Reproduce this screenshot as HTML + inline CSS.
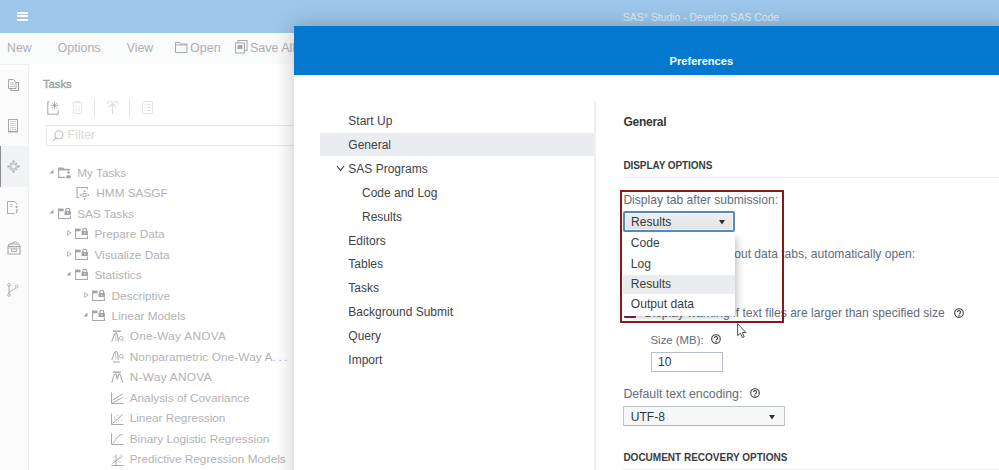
<!DOCTYPE html>
<html><head><meta charset="utf-8"><style>
html,body{margin:0;padding:0;width:999px;height:470px;overflow:hidden;background:#FFFFFF;position:relative}
body>div,body>svg{position:absolute}
.t{white-space:nowrap;line-height:1;font-family:"Liberation Sans", sans-serif}
</style></head><body>
<div style="left:0px;top:0px;width:999px;height:33px;background:#9DC7EA"></div>
<div style="left:17px;top:11.9px;width:11.2px;height:2px;background:#fff"></div>
<div style="left:17px;top:15.4px;width:11.2px;height:2px;background:#fff"></div>
<div style="left:17px;top:18.9px;width:11.2px;height:2px;background:#fff"></div>
<div class="t" style="left:622.8px;top:13.00px;font-size:10.4px;color:#E2EEF8;font-weight:normal;">SAS<sup style="font-size:6px;vertical-align:3px">®</sup> Studio - Develop SAS Code</div>
<div style="left:0px;top:33px;width:999px;height:31px;background:#F9FAFA"></div>
<div class="t" style="left:7px;top:41.79px;font-size:12.3px;color:#AFAFAF;font-weight:normal;">New</div>
<div class="t" style="left:57.5px;top:41.62px;font-size:12.5px;color:#AFAFAF;font-weight:normal;">Options</div>
<div class="t" style="left:126.7px;top:41.79px;font-size:12.3px;color:#AFAFAF;font-weight:normal;">View</div>
<div class="t" style="left:190px;top:41.62px;font-size:12.5px;color:#AFAFAF;font-weight:normal;">Open</div>
<div class="t" style="left:250px;top:41.62px;font-size:12.5px;color:#AFAFAF;font-weight:normal;">Save All</div>
<svg style="left:175px;top:41px" width="13" height="12" viewBox="0 0 13 12"><path d="M0.5 1.5h4l1 1.5h6.5v8.5h-11.5z" fill="none" stroke="#A8A8A8" stroke-width="1"/><path d="M0.5 4h11.5" stroke="#A8A8A8"/></svg>
<svg style="left:235px;top:40px" width="13" height="14" viewBox="0 0 13 14"><rect x="3" y="0.5" width="9" height="10" fill="none" stroke="#A8A8A8"/><rect x="0.5" y="3" width="9" height="10" fill="#F8F8F8" stroke="#A8A8A8"/><rect x="2.5" y="5" width="5" height="4" fill="#A8A8A8"/></svg>
<div style="left:0px;top:64px;width:28px;height:406px;background:#FBFBFC"></div>
<div style="left:0px;top:63.5px;width:28.5px;height:1px;background:#EFF0F4"></div>
<div style="left:28px;top:64px;width:1px;height:406px;background:#EEEFF3"></div>
<div style="left:0px;top:146px;width:28px;height:41px;background:#F1F2F5"></div>
<div style="left:0px;top:146px;width:1.1px;height:41px;background:#8E8E8E"></div>
<div style="left:29px;top:64px;width:265px;height:406px;background:#FFFFFF"></div>
<div class="t" style="left:43px;top:79.33px;font-size:11.3px;color:#9C9C9C;font-weight:normal;-webkit-text-stroke:0.35px #9C9C9C;letter-spacing:-0.05px">Tasks</div>
<svg style="left:7.5px;top:78.5px" width="12" height="13" viewBox="0 0 12 13"><path d="M3 3.5V11.5H10.5V3.5z" fill="none" stroke="#A0A0A0" stroke-width="1.1"/><path d="M0.5 0.5h5l2.5 2.5v6.5h-7.5z" fill="#FBFBFC" stroke="#A5A5A5"/><path d="M2 4h4M2 5.8h4.5M2 7.6h4.5" stroke="#B0B0B0" stroke-width="0.7"/></svg>
<svg style="left:8px;top:118.5px" width="11" height="14" viewBox="0 0 11 14"><rect x="0.5" y="0.5" width="9" height="12" fill="none" stroke="#A8A8A8"/><path d="M2 2.5h6M2 4.5h6M2 6.5h6M2 8.5h6" stroke="#C4C4C4" stroke-width="0.7"/><path d="M2 10.5h1M4.5 10.5h1M7 10.5h1" stroke="#A8A8A8"/><path d="M0 12.9h10" stroke="#9C9C9C"/></svg>
<svg style="left:6.5px;top:160px" width="13" height="13" viewBox="0 0 13 13"><circle cx="6.5" cy="6.5" r="4.2" fill="none" stroke="#C4C4C8" stroke-width="0.7"/><circle cx="6.5" cy="6.5" r="2.8" fill="none" stroke="#A8A8AC" stroke-width="1"/><circle cx="6.5" cy="1.3" r="1" fill="#A4A4A8"/><circle cx="6.5" cy="11.7" r="1" fill="#A4A4A8"/><circle cx="1.3" cy="6.5" r="1" fill="#A4A4A8"/><circle cx="11.7" cy="6.5" r="1" fill="#A4A4A8"/><circle cx="3.5" cy="3.5" r="0.75" fill="#B0B0B4"/><circle cx="9.5" cy="3.5" r="0.75" fill="#B0B0B4"/><circle cx="3.5" cy="9.5" r="0.75" fill="#B0B0B4"/><circle cx="9.5" cy="9.5" r="0.75" fill="#B0B0B4"/></svg>
<svg style="left:7px;top:200.5px" width="12" height="13" viewBox="0 0 12 13"><path d="M7.5 0.5h-7v12h7" fill="none" stroke="#ABABAB"/><path d="M7.5 0.5l2 2v1" fill="none" stroke="#ABABAB"/><path d="M2.5 3.5h3M2.5 5.5h3" stroke="#B5B5B5" stroke-width="0.8"/><circle cx="9.5" cy="6" r="1" fill="#A0A0A0"/><path d="M9.5 8c1 0 1 2.5 -0.5 4" fill="none" stroke="#A0A0A0" stroke-width="1.2"/></svg>
<svg style="left:6.5px;top:240.5px" width="14" height="14" viewBox="0 0 14 14"><path d="M1 5.5h12v7.5h-12z" fill="none" stroke="#A8A8A8" stroke-width="1.1"/><path d="M1 5.5l1-2.5h10l1 2.5" fill="none" stroke="#A8A8A8"/><path d="M3 3l6-2.5 2 2" fill="none" stroke="#A8A8A8"/><path d="M4.5 8h5v2.5h-5z" fill="none" stroke="#A8A8A8" stroke-width="0.9"/><path d="M1 7h12" stroke="#B8B8B8" stroke-width="0.8"/></svg>
<svg style="left:7px;top:282.5px" width="12" height="14" viewBox="0 0 12 14"><path d="M2 2v9" stroke="#A8A8A8"/><path d="M2 11C2 7 9 7 9 4" fill="none" stroke="#A8A8A8"/><circle cx="2" cy="1.8" r="1.3" fill="#fff" stroke="#A8A8A8" stroke-width="0.9"/><circle cx="2" cy="12" r="1.3" fill="#fff" stroke="#A8A8A8" stroke-width="0.9"/><circle cx="9.5" cy="3.5" r="1.3" fill="#fff" stroke="#A8A8A8" stroke-width="0.9"/></svg>
<svg style="left:47.3px;top:100.5px" width="12.5" height="14" viewBox="0 0 12.5 14"><path d="M2.5 1H0.8V13.2H11.2V9.5" fill="none" stroke="#A8A8A8" stroke-width="1.1"/><path d="M7.5 0.8v7M4 4.3h7M5 1.8l5 5M10 1.8l-5 5" stroke="#A0A0A0" stroke-width="0.85"/></svg>
<svg style="left:71.5px;top:101px" width="11" height="13" viewBox="0 0 11 13"><path d="M0 1.8h11M3.5 1.8V0.5h4v1.3" fill="none" stroke="#E0E0E0"/><path d="M1.3 2.5V12.5h8.4V2.5" fill="none" stroke="#E0E0E0"/><path d="M4 4.5v6M7 4.5v6" stroke="#E4E4E4"/></svg>
<svg style="left:106.5px;top:101px" width="11" height="13" viewBox="0 0 11 13"><path d="M0.5 3V0.8H10.5V3" fill="none" stroke="#E0E0E0"/><path d="M5.5 13V3M2 6l3.5-3.5L9 6" fill="none" stroke="#DCDCDC" stroke-width="1.2"/></svg>
<svg style="left:141.5px;top:101px" width="11" height="13" viewBox="0 0 11 13"><rect x="0.5" y="0.5" width="10" height="12" rx="1" fill="none" stroke="#E2E2E2"/><path d="M2.5 3.5h1M5 3.5h3.5M2.5 6.5h1M5 6.5h3.5M2.5 9.5h1M5 9.5h3.5" stroke="#E0E0E0"/></svg>
<div style="left:94px;top:100px;width:1px;height:16px;background:#E4E6EA"></div>
<div style="left:129px;top:100px;width:1px;height:16px;background:#E4E6EA"></div>
<div style="left:46px;top:125px;width:260px;height:21px;border:1px solid #E6E8EC;box-sizing:border-box;background:#FFFFFF"></div>
<div class="t" style="left:67.5px;top:129.42px;font-size:12.5px;color:#DADADA;font-weight:normal;">Filter</div>
<svg style="left:51.5px;top:129.8px" width="12" height="12" viewBox="0 0 12 12"><circle cx="7" cy="4.8" r="4" fill="none" stroke="#BDBDBD" stroke-width="1.1"/><path d="M4.2 7.6L1 10.8" stroke="#BDBDBD" stroke-width="1.1"/></svg>
<div class="t" style="left:77.2px;top:167.81px;font-size:11.8px;color:#B2B2B4;font-weight:normal;">My Tasks</div>
<svg style="left:49.1px;top:168.5px" width="5" height="5" viewBox="0 0 5 5"><path d="M4.5 0.5V4.5H0.5z" fill="#9E9E9E"/></svg>
<svg style="left:57.8px;top:167.20000000000002px" width="14" height="12" viewBox="0 0 14 12"><path d="M0.6 1V10.4H7" fill="none" stroke="#A8A8AC" stroke-width="1.1"/><path d="M0 0.4h5.5l1 1.4H12v1.6H0z" fill="#A9A9AD"/><path d="M0.6 3.2V1" stroke="#A8A8AC"/><circle cx="10.5" cy="5.6" r="1.25" fill="#A3A3A7"/><path d="M8.3 11.2V9.3a1 1 0 0 1 1-1h2.4a1 1 0 0 1 1 1v1.9z" fill="#A3A3A7"/></svg>
<div class="t" style="left:96.3px;top:188.27px;font-size:11.8px;color:#B2B2B4;font-weight:normal;">HMM SASGF</div>
<svg style="left:76px;top:185.96px" width="14" height="14" viewBox="0 0 14 14"><path d="M3 11.5H1V1.5H11.2V3.2" fill="none" stroke="#AEAEB2" stroke-width="1.2"/><circle cx="8.5" cy="5.2" r="0.95" fill="#A8A8AC"/><circle cx="8.5" cy="12.8" r="0.95" fill="#A8A8AC"/><circle cx="4.7" cy="9" r="0.95" fill="#A8A8AC"/><circle cx="12.3" cy="9" r="0.95" fill="#A8A8AC"/><rect x="7" y="7.5" width="3" height="3" fill="none" stroke="#A8A8AC" stroke-width="0.9"/><path d="M6 6.5l1 1M11 6.5l-1 1M6 11.5l1-1M11 11.5l-1-1" stroke="#BDBDC0" stroke-width="0.8"/></svg>
<div class="t" style="left:77.2px;top:208.73px;font-size:11.8px;color:#B2B2B4;font-weight:normal;">SAS Tasks</div>
<svg style="left:49.1px;top:209.42000000000002px" width="5" height="5" viewBox="0 0 5 5"><path d="M4.5 0.5V4.5H0.5z" fill="#9E9E9E"/></svg>
<svg style="left:57.8px;top:207.72000000000003px" width="14" height="12" viewBox="0 0 14 12"><rect x="0" y="0.6" width="5.6" height="2.7" fill="#A3A3A7"/><path d="M0.55 0.6V10.45H12.45V7.6" fill="none" stroke="#A8A8AC" stroke-width="1.1"/><rect x="6.6" y="3" width="6.3" height="4" fill="#A3A3A7"/><path d="M7.9 3.1V2.1a1.85 1.85 0 0 1 3.7 0V3.1" fill="none" stroke="#A3A3A7" stroke-width="1.1"/><rect x="9.3" y="4" width="1" height="2" fill="#E4E4E6"/></svg>
<div class="t" style="left:94.4px;top:229.19px;font-size:11.8px;color:#B2B2B4;font-weight:normal;">Prepare Data</div>
<svg style="left:66.6px;top:230.38px" width="5" height="6" viewBox="0 0 5 6"><path d="M0.6 0.6L4.2 3L0.6 5.4z" fill="none" stroke="#B0B0B0" stroke-width="0.9"/></svg>
<svg style="left:74.8px;top:228.18px" width="14" height="12" viewBox="0 0 14 12"><rect x="0" y="0.6" width="5.6" height="2.7" fill="#A3A3A7"/><path d="M0.55 0.6V10.45H12.45V7.6" fill="none" stroke="#A8A8AC" stroke-width="1.1"/><rect x="6.6" y="3" width="6.3" height="4" fill="#A3A3A7"/><path d="M7.9 3.1V2.1a1.85 1.85 0 0 1 3.7 0V3.1" fill="none" stroke="#A3A3A7" stroke-width="1.1"/><rect x="9.3" y="4" width="1" height="2" fill="#E4E4E6"/></svg>
<div class="t" style="left:94.4px;top:249.65px;font-size:11.8px;color:#B2B2B4;font-weight:normal;">Visualize Data</div>
<svg style="left:66.6px;top:250.83999999999997px" width="5" height="6" viewBox="0 0 5 6"><path d="M0.6 0.6L4.2 3L0.6 5.4z" fill="none" stroke="#B0B0B0" stroke-width="0.9"/></svg>
<svg style="left:74.8px;top:248.64px" width="14" height="12" viewBox="0 0 14 12"><rect x="0" y="0.6" width="5.6" height="2.7" fill="#A3A3A7"/><path d="M0.55 0.6V10.45H12.45V7.6" fill="none" stroke="#A8A8AC" stroke-width="1.1"/><rect x="6.6" y="3" width="6.3" height="4" fill="#A3A3A7"/><path d="M7.9 3.1V2.1a1.85 1.85 0 0 1 3.7 0V3.1" fill="none" stroke="#A3A3A7" stroke-width="1.1"/><rect x="9.3" y="4" width="1" height="2" fill="#E4E4E6"/></svg>
<div class="t" style="left:94.4px;top:270.11px;font-size:11.8px;color:#B2B2B4;font-weight:normal;">Statistics</div>
<svg style="left:66.1px;top:270.8px" width="5" height="5" viewBox="0 0 5 5"><path d="M4.5 0.5V4.5H0.5z" fill="#9E9E9E"/></svg>
<svg style="left:74.8px;top:269.1px" width="14" height="12" viewBox="0 0 14 12"><rect x="0" y="0.6" width="5.6" height="2.7" fill="#A3A3A7"/><path d="M0.55 0.6V10.45H12.45V7.6" fill="none" stroke="#A8A8AC" stroke-width="1.1"/><rect x="6.6" y="3" width="6.3" height="4" fill="#A3A3A7"/><path d="M7.9 3.1V2.1a1.85 1.85 0 0 1 3.7 0V3.1" fill="none" stroke="#A3A3A7" stroke-width="1.1"/><rect x="9.3" y="4" width="1" height="2" fill="#E4E4E6"/></svg>
<div class="t" style="left:111.6px;top:290.57px;font-size:11.8px;color:#B2B2B4;font-weight:normal;">Descriptive</div>
<svg style="left:83.6px;top:291.76px" width="5" height="6" viewBox="0 0 5 6"><path d="M0.6 0.6L4.2 3L0.6 5.4z" fill="none" stroke="#B0B0B0" stroke-width="0.9"/></svg>
<svg style="left:91.8px;top:289.56px" width="14" height="12" viewBox="0 0 14 12"><rect x="0" y="0.6" width="5.6" height="2.7" fill="#A3A3A7"/><path d="M0.55 0.6V10.45H12.45V7.6" fill="none" stroke="#A8A8AC" stroke-width="1.1"/><rect x="6.6" y="3" width="6.3" height="4" fill="#A3A3A7"/><path d="M7.9 3.1V2.1a1.85 1.85 0 0 1 3.7 0V3.1" fill="none" stroke="#A3A3A7" stroke-width="1.1"/><rect x="9.3" y="4" width="1" height="2" fill="#E4E4E6"/></svg>
<div class="t" style="left:111.6px;top:311.03px;font-size:11.8px;color:#B2B2B4;font-weight:normal;">Linear Models</div>
<svg style="left:83.1px;top:311.71999999999997px" width="5" height="5" viewBox="0 0 5 5"><path d="M4.5 0.5V4.5H0.5z" fill="#9E9E9E"/></svg>
<svg style="left:91.8px;top:310.02px" width="14" height="12" viewBox="0 0 14 12"><rect x="0" y="0.6" width="5.6" height="2.7" fill="#A3A3A7"/><path d="M0.55 0.6V10.45H12.45V7.6" fill="none" stroke="#A8A8AC" stroke-width="1.1"/><rect x="6.6" y="3" width="6.3" height="4" fill="#A3A3A7"/><path d="M7.9 3.1V2.1a1.85 1.85 0 0 1 3.7 0V3.1" fill="none" stroke="#A3A3A7" stroke-width="1.1"/><rect x="9.3" y="4" width="1" height="2" fill="#E4E4E6"/></svg>
<div class="t" style="left:129.7px;top:331.49px;font-size:11.8px;color:#B2B2B4;font-weight:normal;letter-spacing:0.32px">One-Way ANOVA</div>
<svg style="left:110.8px;top:329.98px" width="13" height="13.5" viewBox="0 0 13 13.5"><path d="M2 1.2h8" stroke="#A0A0A0" stroke-width="1.3"/><path d="M0.6 11.5C2 10.5 2.5 3 5 3S6.5 10 7.5 11.5" fill="none" stroke="#A8A8A8" stroke-width="1.1"/><path d="M4.8 3.2V11.5" stroke="#B8B8B8" stroke-width="0.8"/><circle cx="10.2" cy="8.2" r="1.8" fill="none" stroke="#B0B0B0" stroke-width="0.9"/><path d="M11.4 9.6l0.8 1.6" stroke="#A8A8A8"/></svg>
<div class="t" style="left:129.7px;top:351.95px;font-size:11.8px;color:#B2B2B4;font-weight:normal;letter-spacing:0.1px">Nonparametric One-Way A<span style="letter-spacing:2.6px">...</span></div>
<svg style="left:110.8px;top:350.44000000000005px" width="13" height="13.5" viewBox="0 0 13 13.5"><path d="M2 12h7" stroke="#B0B0B0" stroke-width="1.1"/><path d="M0.6 10C2 9 2.5 1.5 5 1.5S6.5 8.5 7.5 10" fill="none" stroke="#A8A8A8" stroke-width="1.1"/><path d="M4.8 1.7V10" stroke="#B8B8B8" stroke-width="0.8"/><circle cx="10.2" cy="6.2" r="1.8" fill="none" stroke="#B0B0B0" stroke-width="0.9"/><path d="M11.4 7.6l0.8 1.6" stroke="#A8A8A8"/></svg>
<div class="t" style="left:129.7px;top:372.41px;font-size:11.8px;color:#B2B2B4;font-weight:normal;letter-spacing:0.32px">N-Way ANOVA</div>
<svg style="left:110.8px;top:370.90000000000003px" width="13" height="13.5" viewBox="0 0 13 13.5"><path d="M2 1.2h8" stroke="#A0A0A0" stroke-width="1.3"/><path d="M0.6 11.5C2 10.5 2 3 4.2 3S5.5 8 6.2 8S7 3 8.5 3S10.5 10.5 12 11.5" fill="none" stroke="#A8A8A8" stroke-width="1.1"/></svg>
<div class="t" style="left:129.7px;top:392.87px;font-size:11.8px;color:#B2B2B4;font-weight:normal;">Analysis of Covariance</div>
<svg style="left:110.8px;top:391.36px" width="13" height="13.5" viewBox="0 0 13 13.5"><path d="M0.5 1.5V12.5H12.5" fill="none" stroke="#A8A8A8"/><path d="M1.5 9L11.5 3M1.5 12L11.5 6.5" stroke="#A8A8A8"/></svg>
<div class="t" style="left:129.7px;top:413.33px;font-size:11.8px;color:#B2B2B4;font-weight:normal;">Linear Regression</div>
<svg style="left:110.8px;top:411.82000000000005px" width="13" height="13.5" viewBox="0 0 13 13.5"><path d="M0.5 1.5V12.5H12.5" fill="none" stroke="#A8A8A8"/><path d="M1.5 11.5L11.5 2.5" stroke="#A8A8A8"/><path d="M3 5h1M6 3.5h1M4 8h1M8 6h1M7 9h1M10 8h1M5 10.5h1M2.5 7.5h1" stroke="#C0C0C0"/></svg>
<div class="t" style="left:129.7px;top:433.79px;font-size:11.8px;color:#B2B2B4;font-weight:normal;">Binary Logistic Regression</div>
<svg style="left:110.8px;top:432.28000000000003px" width="13" height="13.5" viewBox="0 0 13 13.5"><path d="M0.5 1.5V12.5H12.5" fill="none" stroke="#A8A8A8"/><path d="M1.5 11.5C4 11 5 3 11.5 2.5" fill="none" stroke="#A8A8A8"/></svg>
<div class="t" style="left:129.7px;top:454.25px;font-size:11.8px;color:#B2B2B4;font-weight:normal;">Predictive Regression Models</div>
<svg style="left:110.8px;top:452.74px" width="13" height="13.5" viewBox="0 0 13 13.5"><path d="M0.5 12.5H12.5M5 1.5V12.5" fill="none" stroke="#A8A8A8"/><path d="M1.5 10.5L11.5 3" stroke="#A8A8A8"/><path d="M2 4h1.5M8 5h1.5M2 7.5h1.5M8 9h1.5M9 2h1.5" stroke="#C0C0C0"/></svg>
<div style="left:294px;top:26px;width:720px;height:460px;background:#fff;box-shadow:0 0 20px rgba(0,0,0,0.24)"></div>
<div style="left:294px;top:26px;width:720px;height:49px;background:#0478CF"></div>
<div class="t" style="left:669.6px;top:55.60px;font-size:11.1px;color:#fff;font-weight:bold;">Preferences</div>
<div style="left:320px;top:133px;width:274px;height:23px;background:#EBECF0"></div>
<div style="left:594px;top:102px;width:2px;height:368px;background:#EEEFF2"></div>
<div class="t" style="left:348.3px;top:114.94px;font-size:12px;color:#404248;font-weight:normal;">Start Up</div>
<div class="t" style="left:348.3px;top:138.86px;font-size:12px;color:#404248;font-weight:normal;">General</div>
<div class="t" style="left:348.3px;top:162.78px;font-size:12px;color:#404248;font-weight:normal;">SAS Programs</div>
<div class="t" style="left:362.0px;top:186.70px;font-size:12px;color:#404248;font-weight:normal;">Code and Log</div>
<div class="t" style="left:362.0px;top:210.62px;font-size:12px;color:#404248;font-weight:normal;">Results</div>
<div class="t" style="left:348.3px;top:234.54px;font-size:12px;color:#404248;font-weight:normal;">Editors</div>
<div class="t" style="left:348.3px;top:258.46px;font-size:12px;color:#404248;font-weight:normal;">Tables</div>
<div class="t" style="left:348.3px;top:282.38px;font-size:12px;color:#404248;font-weight:normal;">Tasks</div>
<div class="t" style="left:348.3px;top:306.30px;font-size:12px;color:#404248;font-weight:normal;">Background Submit</div>
<div class="t" style="left:348.3px;top:330.22px;font-size:12px;color:#404248;font-weight:normal;">Query</div>
<div class="t" style="left:348.3px;top:354.14px;font-size:12px;color:#404248;font-weight:normal;">Import</div>
<svg style="left:336px;top:165px" width="9" height="7" viewBox="0 0 9 7"><path d="M1 1l3.5 4.5L8 1" fill="none" stroke="#3B3D43" stroke-width="1.1"/></svg>
<div class="t" style="left:623.4px;top:116.14px;font-size:12px;color:#33363C;font-weight:bold;letter-spacing:-0.25px">General</div>
<div class="t" style="left:623.4px;top:161.34px;font-size:10px;color:#383B42;font-weight:bold;letter-spacing:-0.08px">DISPLAY OPTIONS</div>
<div style="left:623px;top:177px;width:400px;height:1px;background:#EAECED"></div>
<div class="t" style="left:623.4px;top:193.76px;font-size:12.1px;color:#5F6B7C;font-weight:normal;">Display tab after submission:</div>
<div class="t" style="left:734.2px;top:247.96px;font-size:12.1px;color:#5F6B7C;font-weight:normal;">out data tabs, automatically open:</div>
<div class="t" style="left:644.3px;top:307.16px;font-size:12.1px;color:#5F6B7C;font-weight:normal;">Display warning if text files are larger than specified size</div>
<div style="left:623.7px;top:305.7px;width:12px;height:12px;background:#7B1E52;border-radius:1px"></div>
<div style="left:623.2px;top:211.3px;width:111.9px;height:21.1px;border:2px solid #5A89B5;border-radius:2px;box-sizing:border-box;box-shadow:inset 0 0 0 1px #F4F6F8;background:linear-gradient(#EEEFF3,#E1E2E6)"></div>
<div class="t" style="left:631px;top:216.36px;font-size:12.1px;color:#33363C;font-weight:normal;">Results</div>
<svg style="left:719px;top:220px" width="6" height="5" viewBox="0 0 6 5"><path d="M0 0h6l-3 4.5z" fill="#2B2E33"/></svg>
<div style="left:623.2px;top:232.4px;width:111.9px;height:83.5px;background:#fff;box-shadow:7px 2px 7px -4px rgba(0,0,0,0.2),0 5px 5px -3px rgba(0,0,0,0.14)"></div>
<div style="left:623.2px;top:274.6px;width:111.9px;height:19.7px;background:#EBECEF"></div>
<div class="t" style="left:630.8px;top:236.76px;font-size:12.1px;color:#3A3D43;font-weight:normal;">Code</div>
<div class="t" style="left:630.8px;top:257.76px;font-size:12.1px;color:#3A3D43;font-weight:normal;">Log</div>
<div class="t" style="left:630.8px;top:278.36px;font-size:12.1px;color:#3A3D43;font-weight:normal;">Results</div>
<div class="t" style="left:630.8px;top:298.16px;font-size:12.1px;color:#3A3D43;font-weight:normal;">Output data</div>
<div style="left:619.5px;top:190.2px;width:164.5px;height:133.3px;border:2px solid #8C1717;box-sizing:border-box"></div>
<svg style="left:954px;top:307.5px" width="10" height="10" viewBox="0 0 10 10"><circle cx="5" cy="5" r="4.3" fill="none" stroke="#3E4147" stroke-width="1.15"/><path d="M3.5 4.1a1.5 1.5 0 1 1 2.2 1.3c-.5.3-.7.5-.7 1.1" fill="none" stroke="#3E4147" stroke-width="1.1"/><circle cx="5" cy="7.7" r=".65" fill="#3E4147"/></svg>
<svg style="left:710.5px;top:334.2px" width="10" height="10" viewBox="0 0 10 10"><circle cx="5" cy="5" r="4.3" fill="none" stroke="#3E4147" stroke-width="1.15"/><path d="M3.5 4.1a1.5 1.5 0 1 1 2.2 1.3c-.5.3-.7.5-.7 1.1" fill="none" stroke="#3E4147" stroke-width="1.1"/><circle cx="5" cy="7.7" r=".65" fill="#3E4147"/></svg>
<svg style="left:750.4px;top:388px" width="10" height="10" viewBox="0 0 10 10"><circle cx="5" cy="5" r="4.3" fill="none" stroke="#3E4147" stroke-width="1.15"/><path d="M3.5 4.1a1.5 1.5 0 1 1 2.2 1.3c-.5.3-.7.5-.7 1.1" fill="none" stroke="#3E4147" stroke-width="1.1"/><circle cx="5" cy="7.7" r=".65" fill="#3E4147"/></svg>
<div class="t" style="left:650.5px;top:335.05px;font-size:11.4px;color:#5F6B7C;font-weight:normal;">Size (MB):</div>
<div style="left:651px;top:352px;width:71.7px;height:19.7px;border:1px solid #B6BDC7;box-sizing:border-box;background:#fff"></div>
<div class="t" style="left:658px;top:356.06px;font-size:12.1px;color:#33363C;font-weight:normal;">10</div>
<div class="t" style="left:623.4px;top:387.79px;font-size:12.3px;color:#5F6B7C;font-weight:normal;">Default text encoding:</div>
<div style="left:623.4px;top:406.2px;width:161.5px;height:19.8px;border:1px solid #BFC4CC;border-bottom-color:#AEB4BD;box-sizing:border-box;background:#F6F7F9"></div>
<div class="t" style="left:630.7px;top:410.86px;font-size:12.1px;color:#33363C;font-weight:normal;">UTF-8</div>
<svg style="left:769.3px;top:414.5px" width="6" height="5" viewBox="0 0 6 5"><path d="M0 0h6l-3 4.5z" fill="#2B2E33"/></svg>
<div class="t" style="left:623.4px;top:452.94px;font-size:10px;color:#383B42;font-weight:bold;">DOCUMENT RECOVERY OPTIONS</div>
<div style="left:623px;top:469px;width:400px;height:1px;background:#EAECED"></div>
<svg style="left:737px;top:322.5px" width="11" height="16" viewBox="0 0 11 16"><path d="M0.6 0.6V12.6L3.4 10.2L5.4 14.6L7.2 13.8L5.3 9.6H9z" fill="#fff" stroke="#3A3A3A" stroke-width="0.9" stroke-linejoin="round"/></svg>
</body></html>
